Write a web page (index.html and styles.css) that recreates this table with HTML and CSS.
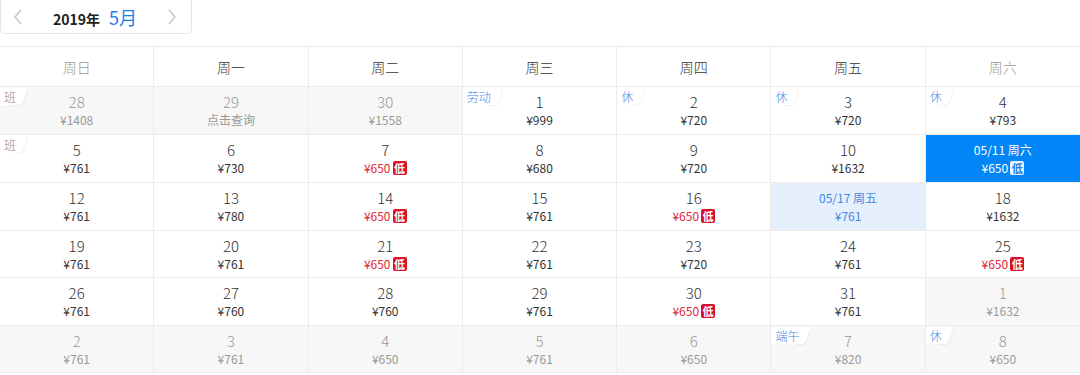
FILE: index.html
```html
<!DOCTYPE html>
<html lang="zh">
<head>
<meta charset="utf-8">
<link rel="stylesheet" href="styles.css">
</head>
<body>
<div class="page">
  <div class="month-bar">
    <span class="arrow"><svg width="10" height="16" viewBox="0 0 10 16"><path d="M8 1 L2 8 L8 15" fill="none" stroke="#c4c4c4" stroke-width="1.4"/></svg></span>
    <span class="title"><b class="year">2019年</b><span class="month">5月</span></span>
    <span class="arrow"><svg width="10" height="16" viewBox="0 0 10 16"><path d="M2 1 L8 8 L2 15" fill="none" stroke="#c4c4c4" stroke-width="1.4"/></svg></span>
  </div>
  <div class="cal">
    <div class="wk weekend">周日</div>
    <div class="wk">周一</div>
    <div class="wk">周二</div>
    <div class="wk">周三</div>
    <div class="wk">周四</div>
    <div class="wk">周五</div>
    <div class="wk weekend">周六</div>

    <div class="c off"><span class="tag gray">班</span><span class="n">28</span><span class="p">¥1408</span></div>
    <div class="c off"><span class="n">29</span><span class="p">点击查询</span></div>
    <div class="c off"><span class="n">30</span><span class="p">¥1558</span></div>
    <div class="c"><span class="tag">劳动</span><span class="n">1</span><span class="p">¥999</span></div>
    <div class="c"><span class="tag">休</span><span class="n">2</span><span class="p">¥720</span></div>
    <div class="c"><span class="tag">休</span><span class="n">3</span><span class="p">¥720</span></div>
    <div class="c"><span class="tag">休</span><span class="n">4</span><span class="p">¥793</span></div>

    <div class="c"><span class="tag gray">班</span><span class="n">5</span><span class="p">¥761</span></div>
    <div class="c"><span class="n">6</span><span class="p">¥730</span></div>
    <div class="c"><span class="n">7</span><span class="p low">¥650<i class="lo">低</i></span></div>
    <div class="c"><span class="n">8</span><span class="p">¥680</span></div>
    <div class="c"><span class="n">9</span><span class="p">¥720</span></div>
    <div class="c"><span class="n">10</span><span class="p">¥1632</span></div>
    <div class="c sel"><span class="n">05/11 周六</span><span class="p">¥650<i class="lo">低</i></span></div>

    <div class="c"><span class="n">12</span><span class="p">¥761</span></div>
    <div class="c"><span class="n">13</span><span class="p">¥780</span></div>
    <div class="c"><span class="n">14</span><span class="p low">¥650<i class="lo">低</i></span></div>
    <div class="c"><span class="n">15</span><span class="p">¥761</span></div>
    <div class="c"><span class="n">16</span><span class="p low">¥650<i class="lo">低</i></span></div>
    <div class="c today"><span class="n">05/17 周五</span><span class="p">¥761</span></div>
    <div class="c"><span class="n">18</span><span class="p">¥1632</span></div>

    <div class="c"><span class="n">19</span><span class="p">¥761</span></div>
    <div class="c"><span class="n">20</span><span class="p">¥761</span></div>
    <div class="c"><span class="n">21</span><span class="p low">¥650<i class="lo">低</i></span></div>
    <div class="c"><span class="n">22</span><span class="p">¥761</span></div>
    <div class="c"><span class="n">23</span><span class="p">¥720</span></div>
    <div class="c"><span class="n">24</span><span class="p">¥761</span></div>
    <div class="c"><span class="n">25</span><span class="p low">¥650<i class="lo">低</i></span></div>

    <div class="c"><span class="n">26</span><span class="p">¥761</span></div>
    <div class="c"><span class="n">27</span><span class="p">¥760</span></div>
    <div class="c"><span class="n">28</span><span class="p">¥760</span></div>
    <div class="c"><span class="n">29</span><span class="p">¥761</span></div>
    <div class="c"><span class="n">30</span><span class="p low">¥650<i class="lo">低</i></span></div>
    <div class="c"><span class="n">31</span><span class="p">¥761</span></div>
    <div class="c off"><span class="n">1</span><span class="p">¥1632</span></div>

    <div class="c off"><span class="n">2</span><span class="p">¥761</span></div>
    <div class="c off"><span class="n">3</span><span class="p">¥761</span></div>
    <div class="c off"><span class="n">4</span><span class="p">¥650</span></div>
    <div class="c off"><span class="n">5</span><span class="p">¥761</span></div>
    <div class="c off"><span class="n">6</span><span class="p">¥650</span></div>
    <div class="c off"><span class="tag">端午</span><span class="n">7</span><span class="p">¥820</span></div>
    <div class="c off"><span class="tag">休</span><span class="n">8</span><span class="p">¥650</span></div>
  </div>
</div>
</body>
</html>
```

FILE: styles.css
```css
* { box-sizing: border-box; }
html, body { margin: 0; padding: 0; background: #fff; }
body {
  font-family: "Noto Sans CJK SC", "Liberation Sans", sans-serif;
  color: #333;
  width: 1080px;
  height: 375px;
  overflow: hidden;
}
.page { display: flex; flex-direction: column; }

.month-bar {
  width: 192px;
  height: 34px;
  border: 1px solid #e6e6e6;
  border-top: none;
  border-radius: 0 0 5px 5px;
  display: flex;
  align-items: center;
  justify-content: space-between;
  padding: 0 14px 0 12px;
}
.arrow { display: flex; align-items: center; }
.title { display: flex; align-items: baseline; gap: 9px; }
.year { font-size: 14px; font-weight: 700; color: #222; }
.month { font-size: 18px; color: #1e7fe6; }

.cal {
  margin-top: 12px;
  display: grid;
  grid-template-columns: repeat(7, 1fr);
  grid-template-rows: 40px 48px 48px 48px 47px 48px 47px;
  border-top: 1px solid #ececec;
  width: 1080px;
  font-weight: 300;
}
.wk {
  display: flex;
  align-items: center;
  justify-content: center;
  font-size: 14px;
  color: #333;
  border-right: 1px solid #ececec;
  border-bottom: 1px solid #ececec;
}
.wk.weekend { color: #999; }
.wk:nth-child(7n), .c:nth-child(7n) { border-right: none; }

.c {
  position: relative;
  display: flex;
  flex-direction: column;
  align-items: center;
  padding-top: 5px;
  border-right: 1px solid #ececec;
  border-bottom: 1px solid #ececec;
  color: #333;
}
.n { font-size: 15px; line-height: 20px; }
.p { font-size: 12px; line-height: 16px; display: flex; align-items: center; font-weight: 400; }
.p.low { color: #e2243a; }
.lo {
  font-style: normal;
  display: inline-flex;
  align-items: center;
  justify-content: center;
  width: 14px;
  height: 14px;
  margin-left: 2px;
  background: #d8102a;
  color: #fff;
  font-size: 11px;
  border-radius: 2px;
  font-weight: 700;
}
.c.off { background: #f7f7f7; color: #999; }
.c.today { background: #e6f0fc; color: #3f8ae6; }
.c.sel { background: #0086f6; color: #fff; }
.c.sel .n { font-size: 12px; font-weight: 400; }
.c.today .n { font-size: 12px; font-weight: 400; }
.c.sel .lo { background: #e6f1ff; color: #1d7fe6; }

.tag {
  position: absolute;
  top: 1px;
  left: 0;
  height: 17px;
  padding: 0 3px 0 4px;
  font-size: 12px;
  line-height: 17px;
  color: #3f8ae6;
  background: #fff;
  z-index: 1;
}
.tag::after {
  content: "";
  position: absolute;
  top: 0;
  right: -6px;
  width: 10px;
  height: 17px;
  background: #fff;
  transform: skewX(-18deg);
  border-radius: 0 3px 4px 0;
  box-shadow: 1px 1px 1px rgba(0,0,0,0.06);
  z-index: -1;
}
.tag.gray { color: #888; }
```
